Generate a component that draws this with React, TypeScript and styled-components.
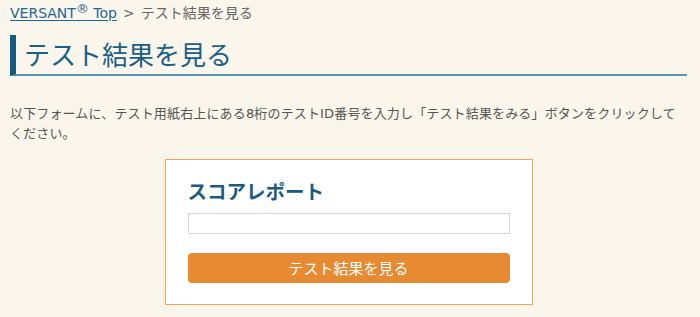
import React from "react";
import styled, { createGlobalStyle } from "styled-components";

const GlobalStyle = createGlobalStyle`
  html, body {
    margin: 0;
    padding: 0;
    background: #faf6eb;
  }
  body {
    font-family: "DejaVu Sans", "Noto Sans CJK JP", sans-serif;
    color: #555555;
  }
  * { box-sizing: border-box; }
`;

const Page = styled.div`
  padding: 0 13px 0 10px;
`;

const Breadcrumb = styled.nav`
  display: flex;
  align-items: baseline;
  gap: 6px;
  padding-top: 3px;
  font-size: 14px;
  line-height: 20px;
  color: #666666;
  font-family: "DejaVu Sans", "Noto Sans CJK JP", sans-serif;
`;

const CrumbLink = styled.a`
  color: #1c6894;
  text-decoration: underline;
  text-underline-offset: 2px;
  font-size: 14px;
  sup {
    font-size: 13px;
    line-height: 0;
    vertical-align: 5px;
  }
`;

const Title = styled.h1`
  margin: 12px 0 0;
  padding: 2px 0 3px 8px;
  border-left: 6px solid #135a80;
  border-bottom: 2px solid #5a93b4;
  font-family: "Noto Sans CJK JP", sans-serif;
  font-size: 26px;
  font-weight: 400;
  line-height: 34px;
  color: #1b5e87;
`;

const Lead = styled.p`
  margin: 28px 0 0;
  font-family: "DejaVu Sans", "Noto Sans CJK JP", sans-serif;
  font-size: 13px;
  line-height: 20px;
  letter-spacing: 0.15px;
  color: #555555;
`;

const Card = styled.section`
  width: 368px;
  margin: 15px auto 0;
  padding: 16px 22px 21px;
  background: #ffffff;
  border: 1px solid #f0a55a;
  display: flex;
  flex-direction: column;
`;

const CardTitle = styled.h2`
  margin: 0;
  font-family: "Noto Sans CJK JP", sans-serif;
  font-size: 19.5px;
  font-weight: 700;
  line-height: 30px;
  color: #1a5a85;
`;

const IdInput = styled.input`
  margin-top: 7px;
  height: 21px;
  width: 100%;
  border: 1px solid #d7d7d7;
  background: #ffffff;
  padding: 0 4px;
  font-size: 13px;
  outline: none;
`;

const SubmitButton = styled.button`
  margin-top: 19px;
  height: 30px;
  width: 100%;
  border: none;
  border-radius: 4px;
  background: #e88a31;
  color: #ffffff;
  font-family: "Noto Sans CJK JP", sans-serif;
  font-size: 15px;
  line-height: 30px;
  cursor: pointer;
  padding: 0;
`;

export default function App() {
  return (
    <>
      <GlobalStyle />
      <Page>
        <Breadcrumb>
          <CrumbLink href="#">
            VERSANT<sup>®</sup> Top
          </CrumbLink>
          <span>&gt;</span>
          <span>テスト結果を見る</span>
        </Breadcrumb>
        <Title>テスト結果を見る</Title>
        <Lead>
          以下フォームに、テスト用紙右上にある8桁のテストID番号を入力し「テスト結果をみる」ボタンをクリックしてください。
        </Lead>
        <Card>
          <CardTitle>スコアレポート</CardTitle>
          <IdInput type="text" />
          <SubmitButton type="button">テスト結果を見る</SubmitButton>
        </Card>
      </Page>
    </>
  );
}
